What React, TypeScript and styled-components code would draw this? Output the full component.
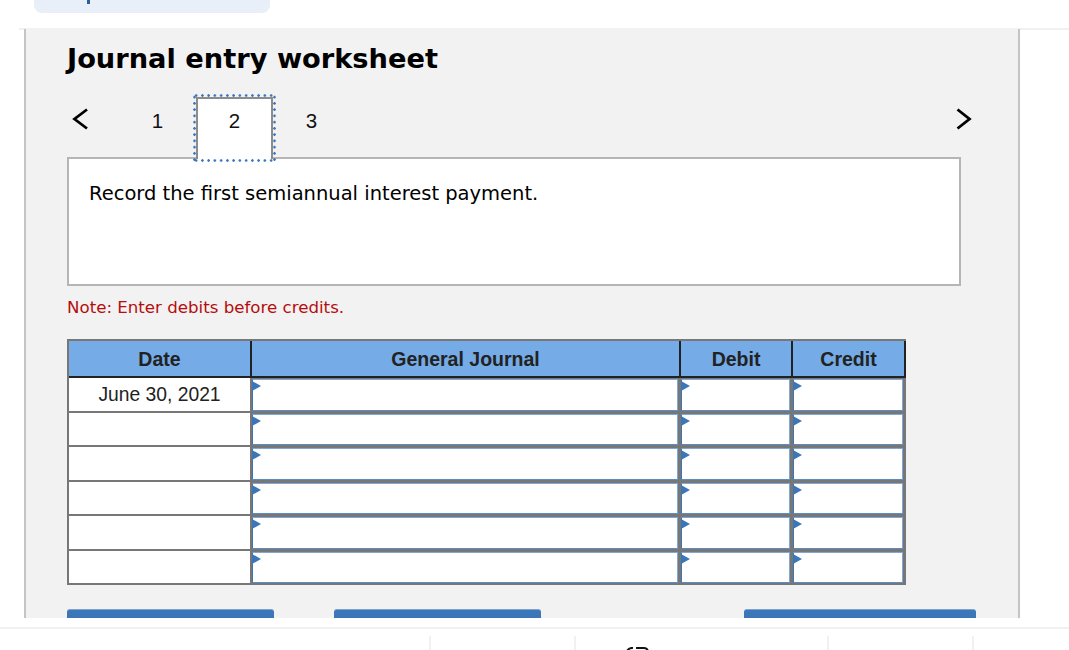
import React from "react";
import styled, { createGlobalStyle } from "styled-components";

const Global = createGlobalStyle`
  html, body { margin: 0; padding: 0; background: #fff; height: 650px; overflow: hidden; }
  * { box-sizing: border-box; }
`;

const Page = styled.div`
  width: 1069px;
  height: 650px;
  overflow: hidden;
  background: #fff;
  font-family: "DejaVu Sans", sans-serif;
  color: #000;
`;

const TopBar = styled.div`
  height: 28px;
  padding-left: 34px;
`;

const TopPill = styled.div`
  width: 236px;
  height: 13px;
  background: #e8eff8;
  border-radius: 0 0 8px 8px;
  padding-left: 53px;
`;

const TopStem = styled.div`
  width: 3px;
  height: 4px;
  background: #2a6099;
`;

const Rule = styled.div<{ $indent: number; $gap?: number }>`
  height: 2px;
  margin-left: ${(p) => p.$indent}px;
  margin-top: ${(p) => p.$gap ?? 0}px;
  background: #f1f1f1;
`;

const Panel = styled.main`
  width: 996px;
  height: 589px;
  margin: -1px 0 0 24px;
  padding: 0 42px 0 41px;
  overflow: hidden;
  background: #f2f2f2;
  border-left: 2px solid #c4c4c4;
  border-right: 2px solid #c4c4c4;
`;

const Title = styled.h2`
  margin: 0;
  height: 68px;
  padding-top: 13px;
  font-size: 27.25px;
  line-height: 33px;
  font-weight: 700;
`;

const TabRow = styled.div`
  display: flex;
  align-items: flex-start;
  height: 60px;
  position: relative;
  z-index: 1;
`;

const Chevron = styled.svg<{ $push?: boolean }>`
  flex: none;
  width: 16px;
  height: 24px;
  margin-top: 10px;
  margin-left: ${(p) => (p.$push ? "auto" : "5px")};
  margin-right: ${(p) => (p.$push ? "4px" : "0")};
`;

const Tabs = styled.div`
  display: flex;
  margin-left: 31px;
`;

const Tab = styled.div<{ $active?: boolean }>`
  position: relative;
  width: 77px;
  height: 62px;
  display: flex;
  justify-content: center;
  padding-top: 10px;
  font-family: "Liberation Sans", sans-serif;
  font-size: 20.5px;
  line-height: 23px;
  background: ${(p) => (p.$active ? "#fff" : "transparent")};
  border: 2px solid ${(p) => (p.$active ? "#8c8c8c" : "transparent")};
  border-bottom: 0;
  color: #111;

  &::after {
    content: "";
    display: ${(p) => (p.$active ? "block" : "none")};
    position: absolute;
    inset: -5px -5px -3px;
    pointer-events: none;
    background-image:
      radial-gradient(circle, #3a76b8 1px, transparent 1.5px),
      radial-gradient(circle, #3a76b8 1px, transparent 1.5px),
      radial-gradient(circle, #3a76b8 1px, transparent 1.5px),
      radial-gradient(circle, #3a76b8 1px, transparent 1.5px);
    background-size: 6.25px 3px, 6.25px 3px, 3px 6.25px, 3px 6.25px;
    background-repeat: repeat-x, repeat-x, repeat-y, repeat-y;
    background-position: left top, left bottom, left top, right top;
  }
`;

const Prompt = styled.section`
  width: 894px;
  height: 129px;
  padding: 22px 20px 0;
  background: #fff;
  border: 2px solid #b5b5b5;
  font-size: 19.5px;
  line-height: 26px;
`;

const Note = styled.p`
  margin: 0;
  height: 53px;
  padding-top: 12px;
  font-size: 16.65px;
  line-height: 20px;
  color: #b50d0d;
`;

const Sheet = styled.div`
  width: 839px;
  height: 246px;
  border-top: 2px solid #777;
  border-left: 2px solid #777;
  background: #777;
`;

const HeadRow = styled.div`
  display: grid;
  grid-template-columns: 183px 429px 112px 113px;
  height: 37px;
  background: #75abe6;
  border-bottom: 2px solid #222;
`;

const HeadCell = styled.div`
  display: flex;
  align-items: center;
  justify-content: center;
  padding-top: 1px;
  border-right: 2px solid #222;
  font-family: "Liberation Sans", sans-serif;
  font-size: 19.5px;
  font-weight: 700;
  color: #222;
`;

const Row = styled.div`
  display: grid;
  grid-template-columns: 183px 429px 112px 113px;
  height: 34.5px;
`;

const DateCell = styled.div`
  display: flex;
  align-items: center;
  justify-content: center;
  padding-top: 1px;
  margin: 0 2px 2px 0;
  background: #fff;
  font-family: "Liberation Sans", sans-serif;
  font-size: 19.3px;
  color: #222;
`;

const EntryCell = styled.div`
  position: relative;
  padding: 1px 3px 2px 0;
`;

const Entry = styled.div`
  height: 100%;
  background: #fff;
  border: 1px solid #3a76b8;
  border-top-color: #7fa8d8;
  border-right-color: #7fa8d8;
  border-bottom-color: #5a8cc8;
`;

const Flag = styled.span`
  position: absolute;
  left: 0;
  top: 3px;
  width: 0;
  height: 0;
  border-left: 9px solid #3a76b8;
  border-top: 5px solid transparent;
  border-bottom: 5px solid transparent;
`;

const Actions = styled.div`
  display: flex;
  margin-top: 24px;
`;

const Action = styled.button<{ $w: number; $gap: number }>`
  width: ${(p) => p.$w}px;
  height: 12px;
  margin-right: ${(p) => p.$gap}px;
  padding: 0;
  flex: none;
  border: 0;
  border-top: 1px solid #7fa3cc;
  border-radius: 3px 3px 0 0;
  background: #3a76b8;
`;

const Footer = styled.div`
  display: flex;
  height: 14px;
  margin-top: 7px;
`;

const FooterCell = styled.div<{ $w: number; $line?: boolean }>`
  flex: none;
  width: ${(p) => p.$w}px;
  border-left: ${(p) => (p.$line ? "2px solid #f1f1f1" : "none")};
  position: relative;
`;

const FooterGlyph = styled.svg`
  position: absolute;
  left: 50px;
  top: 11px;
  width: 23px;
  height: 4px;
`;

const rows = ["June 30, 2021", "", "", "", "", ""];

export default function App() {
  return (
    <Page>
      <Global />
      <TopBar>
        <TopPill>
          <TopStem />
        </TopPill>
      </TopBar>
      <Rule $indent={19} />
      <Panel>
        <Title>Journal entry worksheet</Title>
        <TabRow>
          <Chevron viewBox="0 0 16 24">
            <path d="M15 2.5 L2.5 12 L15 21.5" fill="none" stroke="#000" strokeWidth="2.8" />
          </Chevron>
          <Tabs>
            <Tab>1</Tab>
            <Tab $active>2</Tab>
            <Tab>3</Tab>
          </Tabs>
          <Chevron $push viewBox="0 0 16 24">
            <path d="M1.5 2.5 L13.5 12 L1.5 21.5" fill="none" stroke="#000" strokeWidth="2.8" />
          </Chevron>
        </TabRow>
        <Prompt>Record the first semiannual interest payment.</Prompt>
        <Note>Note: Enter debits before credits.</Note>
        <Sheet>
          <HeadRow>
            <HeadCell>Date</HeadCell>
            <HeadCell>General Journal</HeadCell>
            <HeadCell>Debit</HeadCell>
            <HeadCell>Credit</HeadCell>
          </HeadRow>
          {rows.map((date, i) => (
            <Row key={i}>
              <DateCell>{date}</DateCell>
              {[0, 1, 2].map((c) => (
                <EntryCell key={c}>
                  <Entry />
                  <Flag />
                </EntryCell>
              ))}
            </Row>
          ))}
        </Sheet>
        <Actions>
          <Action $w={207} $gap={60} />
          <Action $w={207} $gap={203} />
          <Action $w={232} $gap={0} />
        </Actions>
      </Panel>
      <Rule $indent={0} $gap={9} />
      <Footer>
        <FooterCell $w={429} />
        <FooterCell $w={145} $line />
        <FooterCell $w={253} $line>
          <FooterGlyph viewBox="0 0 23 4">
            <path d="M1 4 Q3 0.5 7 1 M10 1 H18 Q21 1 22 4" fill="none" stroke="#111" strokeWidth="2" />
          </FooterGlyph>
        </FooterCell>
        <FooterCell $w={145} $line />
        <FooterCell $w={96} $line />
      </Footer>
    </Page>
  );
}
